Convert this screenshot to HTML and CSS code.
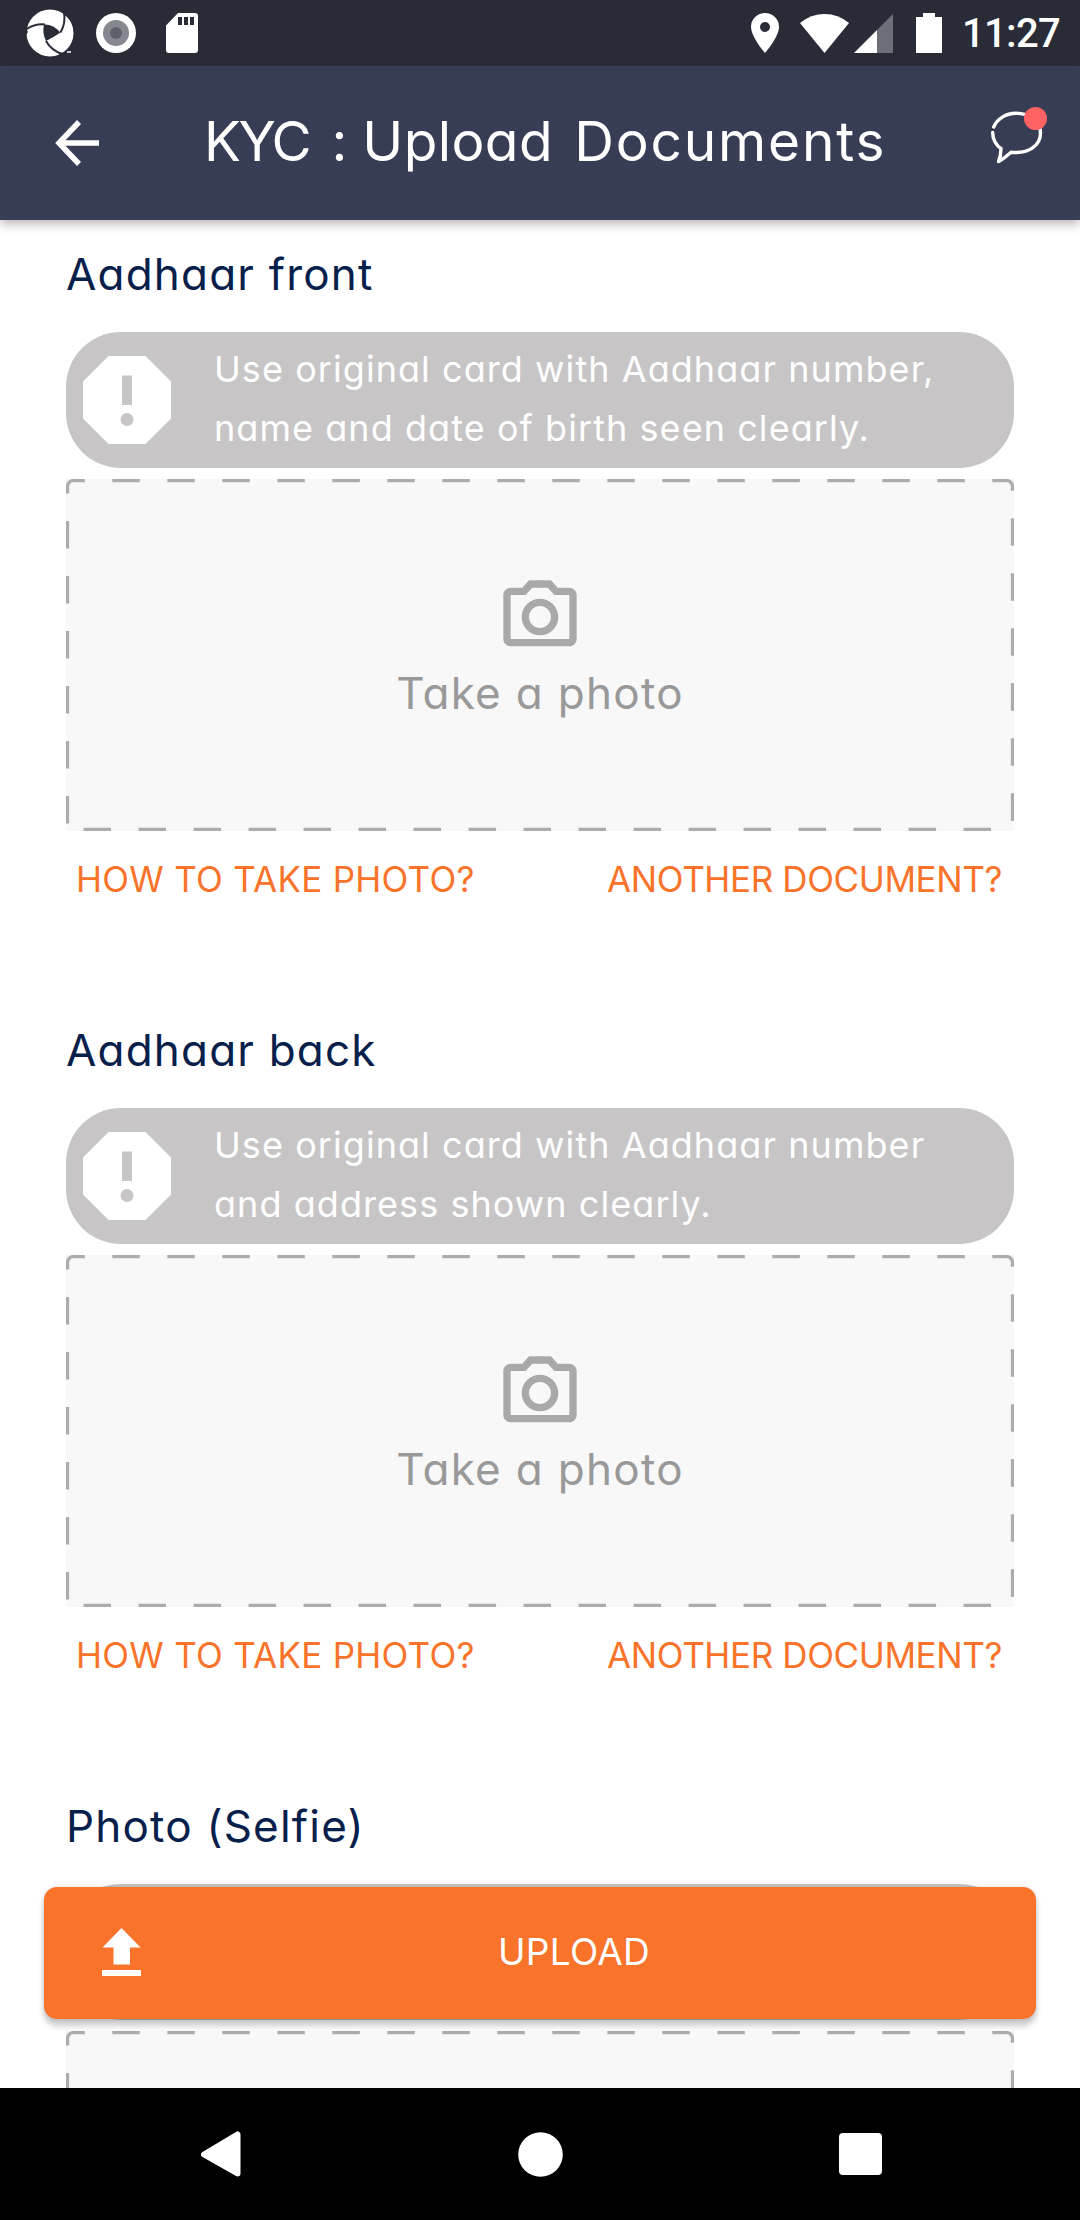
FILE: index.html
```html
<!DOCTYPE html>
<html lang="en">
<head>
<meta charset="utf-8">
<title>KYC : Upload Documents</title>
<link rel="stylesheet" href="styles.css">
</head>
<body>
<svg class="defs" width="0" height="0">
  <symbol id="alert" viewBox="0 0 88 88">
    <path fill="#fff" fill-rule="evenodd" d="M25.500 0h37L88 25.500v37L62.500 88h-37L0 62.500v-37zM39 19.500v29.500h10V19.500zM44 57a6.500 6.500 0 1 0 0 13a6.500 6.500 0 1 0 0-13z"/>
  </symbol>
  <symbol id="camera" viewBox="0 0 24 24">
    <path fill="#a9a9a9" d="M14.120 4l1.830 2H20v12H4V6h4.050l1.830-2h4.240M15 2H9L7.170 4H4c-1.100 0-2 .9-2 2v12c0 1.100.9 2 2 2h16c1.100 0 2-.9 2-2V6c0-1.100-.9-2-2-2h-3.170L15 2zm-3 7c1.650 0 3 1.350 3 3s-1.350 3-3 3-3-1.350-3-3 1.350-3 3-3m0-2c-2.760 0-5 2.240-5 5s2.240 5 5 5 5-2.240 5-5-2.240-5-5-5z"/>
  </symbol>
  <symbol id="dashes" viewBox="0 0 948 352">
    <path fill="none" stroke="#acacac" stroke-width="3.300" stroke-dasharray="27.500 27.500" d="M1.500 344.500V7.500a6 6 0 0 1 6-6h933a6 6 0 0 1 6 6v337a6 6 0 0 1-6 6H7.500a6 6 0 0 1-6-6"/>
  </symbol>
</svg>
<div class="screen">
  <div class="status">
    <div class="status-left">
      <svg width="48" height="48" viewBox="0 0 48 48">
        <circle cx="24" cy="24" r="23.500" fill="#fff"/>
        <path fill="#292c37" d="M18 15.500Q27 15 34.500 23.500Q28 28 20 32Q16 24 18 15.500z"/>
        <g fill="none" stroke="#292c37" stroke-width="2">
          <path d="M0 20.500Q9 14.500 19 15.500"/>
          <path d="M38 3Q40 14 34.500 23.500"/>
          <path d="M20 32Q25 41 36 45"/>
        </g>
        <path fill="#292c37" d="M38 0L39 6L48 14V0zM0 19L2 23L0 26zM31 48L34 44L40 43L48 38V48z"/>
        <path stroke="#fff" stroke-width="1.500" d="M41 43h4"/>
      </svg>
      <svg class="rec" width="40" height="40" viewBox="0 0 40 40">
        <circle cx="20" cy="20" r="20" fill="#fff"/><circle cx="20" cy="20" r="13" fill="#85888f"/><circle cx="20" cy="20" r="6" fill="#5e616a"/>
      </svg>
      <svg class="sd" width="32" height="40" viewBox="0 0 32 40">
        <path fill="#fff" fill-rule="evenodd" d="M12 0h17a3 3 0 0 1 3 3v34a3 3 0 0 1-3 3H3a3 3 0 0 1-3-3V12.500zM12 4v8h4V4zM18 4v8h4V4zM24 4v8h4V4z"/>
      </svg>
    </div>
    <div class="status-right">
      <svg width="28" height="40" viewBox="0 0 28 40"><path fill="#fff" fill-rule="evenodd" d="M14 0a14 14 0 0 1 14 14c0 10-14 26-14 26S0 24 0 14A14 14 0 0 1 14 0zm0 9a5 5 0 1 0 0 10a5 5 0 0 0 0-10z"/></svg>
      <svg class="wifi" width="49" height="39" viewBox="0 0 49 39"><path fill="#fff" d="M0 9Q11 0 24.500 0T49 9L24.500 39z"/></svg>
      <svg class="signal" width="39" height="39" viewBox="0 0 39 39"><path fill="#6c6f77" d="M39 0v39H23V16z"/><path fill="#fff" d="M23 16v23H0z"/></svg>
      <svg class="battery" width="26" height="40" viewBox="0 0 26 40"><path fill="#fff" d="M7 0h12v4h7v36H0V4h7z"/></svg>
      <span class="clock">11:27</span>
    </div>
  </div>
  <header class="appbar">
    <svg class="back" width="44" height="46" viewBox="0 0 44 46"><path fill="none" stroke="#fff" stroke-width="5.500" d="M44 23H4M24 2L4 23L24 44"/></svg>
    <h1 class="title"><span class="title-kyc">KYC</span> <span class="title-colon">:</span> <span class="title-upload">Upload</span> Documents</h1>
    <svg class="chat" width="60" height="60" viewBox="0 0 60 60">
      <path fill="none" stroke="#fff" stroke-width="3.400" stroke-linecap="round" stroke-linejoin="round" d="M6.700 21C10 13 19 7.300 29 7.300C43 7.300 53.500 16 53.500 27C53.500 39 42 48.500 24 46.200C20 49.500 16 53.500 11.500 55.500C13.500 51 14 46 14 42.500C9 39.500 5.500 33 5.700 26.500"/>
      <circle cx="48.500" cy="12.500" r="11.500" fill="#ff6262"/>
    </svg>
  </header>
  <main class="content">
    <section class="doc">
      <h2 class="doc-title">Aadhaar front</h2>
      <div class="notice"><svg class="notice-icon"><use href="#alert"/></svg><p>Use original card with Aadhaar number,<br>name and date of birth seen clearly.</p></div>
      <div class="photo"><svg class="photo-border"><use href="#dashes"/></svg><svg class="photo-icon"><use href="#camera"/></svg><span class="photo-label">Take a photo</span></div>
      <div class="links"><a class="how">HOW TO TAKE PHOTO?</a><a class="another">ANOTHER DOCUMENT?</a></div>
    </section>
    <section class="doc">
      <h2 class="doc-title">Aadhaar back</h2>
      <div class="notice"><svg class="notice-icon"><use href="#alert"/></svg><p>Use original card with Aadhaar number<br>and address shown clearly.</p></div>
      <div class="photo"><svg class="photo-border"><use href="#dashes"/></svg><svg class="photo-icon"><use href="#camera"/></svg><span class="photo-label">Take a photo</span></div>
      <div class="links"><a class="how">HOW TO TAKE PHOTO?</a><a class="another">ANOTHER DOCUMENT?</a></div>
    </section>
    <section class="doc">
      <h2 class="doc-title">Photo (Selfie)</h2>
      <div class="notice"></div>
      <div class="photo"><svg class="photo-border"><use href="#dashes"/></svg></div>
    </section>
    <button class="upload">
      <svg class="upload-icon" width="40" height="48" viewBox="0 0 40 48"><path fill="#fff" d="M19.500 0L38.500 19.500H28V36.500H11.500V19.500H.5zM0 42h39v6H0z"/></svg>
      <span class="upload-label">UPLOAD</span>
    </button>
  </main>
  <nav class="navbar">
    <svg width="40" height="46" viewBox="0 0 40 46"><path fill="#fff" stroke="#fff" stroke-width="6" stroke-linejoin="round" d="M3 23.500L36.500 3.500V42.500z"/></svg>
    <svg width="45" height="45" viewBox="0 0 45 45"><circle cx="22.500" cy="22.500" r="22.300" fill="#fff"/></svg>
    <svg width="43" height="42" viewBox="0 0 43 42"><rect width="43" height="42" rx="4" fill="#fff"/></svg>
  </nav>
</div>
</body>
</html>
```
FILE: styles.css
```css
* { box-sizing: border-box; margin: 0; padding: 0; }
body { font-family: "Inter", "Open Sans", sans-serif; font-feature-settings: "cv11"; background: #fff; }
svg { display: block; flex: none; }
.defs { position: absolute; }
.screen { width: 1080px; height: 2220px; display: flex; flex-direction: column; overflow: hidden; }

.status { height: 66px; flex: none; background: #292c37; display: flex; justify-content: space-between; align-items: center; padding: 0 21px 0 26px; }
.status-left, .status-right { display: flex; align-items: center; }
.rec { margin-left: 22px; }
.sd { margin-left: 30px; }
.wifi { margin-left: 21px; }
.signal { margin-left: 5px; }
.battery { margin-left: 23px; }
.clock { font-family: Roboto, sans-serif; font-weight: 500; font-size: 40px; line-height: 48px; letter-spacing: -.7px; color: #fff; margin-left: 20px; padding-top: 2px; width: 97px; white-space: nowrap; }

.appbar { height: 154px; flex: none; background: #373d55; display: flex; align-items: center; padding: 0 33px 0 55px; position: relative; z-index: 1; box-shadow: 0 4px 10px rgba(60, 45, 45, .35); }
.title { font-size: 55px; line-height: 66px; font-weight: 400; color: #fff; letter-spacing: 1.800px; white-space: nowrap; margin: 0 auto 5px 105px; }
.title-kyc { letter-spacing: -2.500px; margin-right: 5px; }
.title-colon { margin-right: -4px; }
.title-upload { letter-spacing: .4px; margin-right: 4px; }
.chat { margin-bottom: 14px; }

.content { height: 1868px; flex: none; overflow: hidden; position: relative; }
.doc { height: 776px; padding: 24px 66px 0; }
.doc-title { font-size: 44px; line-height: 60px; font-weight: 400; color: #07204b; letter-spacing: 1.200px; }
.notice { height: 136px; margin-top: 28px; border-radius: 55px; background: #c7c5c6; display: flex; align-items: center; padding-left: 17px; color: #fff; }
.notice-icon { width: 88px; height: 88px; }
.notice p { font-size: 36px; line-height: 59px; letter-spacing: 1.060px; margin: -3px 0 0 43px; white-space: nowrap; }
.photo { height: 352px; margin-top: 11px; background: #f8f8f8; display: flex; flex-direction: column; align-items: center; padding-top: 94px; position: relative; }
.photo-border { position: absolute; inset: 0; width: 948px; height: 352px; }
.photo-icon { width: 88px; height: 88px; }
.photo-label { font-size: 44px; line-height: 60px; letter-spacing: 1.300px; color: #999; margin-top: 2px; }
.links { display: flex; justify-content: space-between; margin-top: 18px; padding: 0 12px 0 10px; font-size: 35px; line-height: 60px; color: #f9732a; }
.how { letter-spacing: .27px; }
.another { letter-spacing: -.38px; }

.upload { position: absolute; left: 44px; top: 1667px; width: 992px; height: 132px; border: 0; border-radius: 13px; background: #f9732a; color: #fff; font: inherit; font-feature-settings: inherit; display: flex; align-items: center; padding-left: 58px; box-shadow: 0 7px 6px rgba(0, 0, 0, .2), 0 0 5px rgba(0, 0, 0, .14); }
.upload-icon { margin-bottom: 3px; }
.upload-label { font-size: 37px; line-height: 44px; letter-spacing: .3px; margin: 0 0 3px 356px; }

.navbar { height: 132px; flex: none; background: #000; display: flex; justify-content: space-between; align-items: center; padding: 0 198px 0 201px; }
```
